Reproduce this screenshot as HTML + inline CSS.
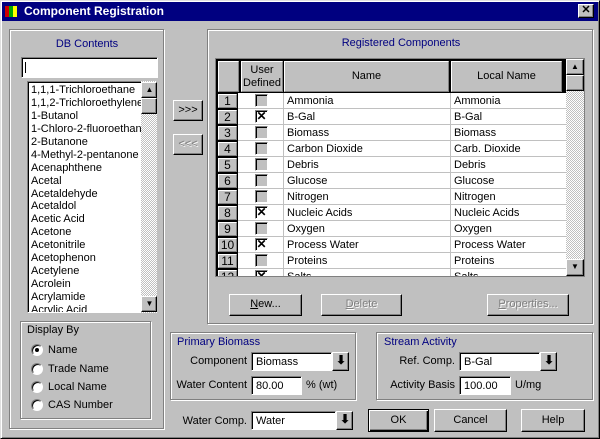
<!DOCTYPE html>
<html><head><style>
*{box-sizing:border-box;margin:0;padding:0}
body{width:600px;height:439px;background:#c0c0c0;font-family:"Liberation Sans",sans-serif;font-size:11px;color:#000;position:relative;overflow:hidden}
.a{position:absolute}
.win{left:0;top:0;width:600px;height:439px;border:1px solid;border-color:#dfdfdf #000 #000 #dfdfdf;box-shadow:inset 1px 1px #fff,inset -1px -1px #808080}
.title{left:2px;top:2px;width:596px;height:19px;background:#000080;color:#fff;font-weight:bold;font-size:12px;line-height:19px;padding-left:22px}
.grp{border:1px solid #808080;box-shadow:1px 1px #fff,inset 1px 1px #fff}
.btn{background:#c0c0c0;border:1px solid;border-color:#fff #000 #000 #fff;box-shadow:inset -1px -1px #808080;text-align:center;line-height:19px}
.sunk{background:#fff;border:1px solid;border-color:#808080 #fff #fff #808080;box-shadow:inset 1px 1px #000}
.blue{color:#000080}
.dis{color:#808080;text-shadow:1px 1px #fff}
.chk{width:13px;height:13px;border:1px solid;border-color:#808080 #fff #fff #808080;box-shadow:inset 1px 1px #000;background:#c0c0c0;font-size:12px;font-weight:bold;line-height:11px;text-align:center}
.chk.x{background:#fff}
.hdr{background:#c0c0c0;border:1px solid;border-color:#fff #808080 #808080 #fff;text-align:center}
.track{background-color:#e0e0e0;background-image:repeating-conic-gradient(#c0c0c0 0 25%,#fff 0 50%);background-size:2px 2px}
.rad{width:12px;height:12px;border-radius:50%;border:1px solid;border-color:#808080 #fff #fff #808080;background:#fff;box-shadow:inset 1px 1px #000}
.dd{width:17px;height:17px;font-size:10px;line-height:15px;padding-left:1px}
</style></head><body>
<div class="a win"></div>
<div class="a title">Component Registration</div>
<div class="a" style="left:5px;top:6px;width:12px;height:11px;background:linear-gradient(90deg,#c00 0 33%,#0a0 33% 66%,#ff0 66%)"></div>
<div class="a btn" style="left:578px;top:4px;width:16px;height:14px;line-height:11px;font-weight:bold;font-size:11px">✕</div>

<!-- left group -->
<div class="a grp" style="left:9px;top:29px;width:155px;height:400px"></div>
<div class="a blue" style="left:10px;top:38px;width:154px;text-align:center">DB Contents</div>
<div class="a sunk" style="left:21px;top:57px;width:137px;height:21px"><div class="a" style="left:3px;top:4px;width:1px;height:11px;background:#000"></div></div>
<div class="a sunk" style="left:27px;top:81px;width:115px;height:232px;overflow:hidden;line-height:12.94px;padding:2px 0 0 3px;white-space:nowrap">
1,1,1-Trichloroethane<br>1,1,2-Trichloroethylene<br>1-Butanol<br>1-Chloro-2-fluoroethane<br>2-Butanone<br>4-Methyl-2-pentanone<br>Acenaphthene<br>Acetal<br>Acetaldehyde<br>Acetaldol<br>Acetic Acid<br>Acetone<br>Acetonitrile<br>Acetophenon<br>Acetylene<br>Acrolein<br>Acrylamide<br>Acrylic Acid</div>
<div class="a track" style="left:141px;top:81px;width:16px;height:232px"></div>
<div class="a btn dd" style="left:141px;top:82px;width:16px;height:16px;line-height:13px;font-size:8px">▲</div>
<div class="a btn" style="left:141px;top:98px;width:16px;height:16px"></div>
<div class="a btn dd" style="left:141px;top:296px;width:16px;height:16px;line-height:13px;font-size:8px">▼</div>

<div class="a grp" style="left:20px;top:321px;width:131px;height:98px"></div>
<div class="a" style="left:27px;top:324px">Display By</div>
<div class="a rad" style="left:31px;top:344px"><div class="a" style="left:3px;top:3px;width:4px;height:4px;background:#000;border-radius:50%"></div></div>
<div class="a" style="left:48px;top:344px">Name</div>
<div class="a rad" style="left:31px;top:363px"></div><div class="a" style="left:48px;top:363px">Trade Name</div>
<div class="a rad" style="left:31px;top:381px"></div><div class="a" style="left:48px;top:381px">Local Name</div>
<div class="a rad" style="left:31px;top:399px"></div><div class="a" style="left:48px;top:399px">CAS Number</div>

<div class="a btn" style="left:173px;top:100px;width:30px;height:21px">&gt;&gt;&gt;</div>
<div class="a btn dis" style="left:173px;top:134px;width:30px;height:21px">&lt;&lt;&lt;</div>

<!-- right group -->
<div class="a grp" style="left:207px;top:29px;width:386px;height:295px"></div>
<div class="a blue" style="left:208px;top:37px;width:386px;text-align:center">Registered Components</div>
<div class="a" style="left:215px;top:58px;width:370px;height:219px;background:#fff;border:1px solid #808080;overflow:hidden">
 <div class="a" style="left:0;top:0;width:350px;height:34px;background:#000"></div>
 <div class="a" style="left:0;top:0;width:22px;height:218px;background:#000"></div>
 <div class="a hdr" style="left:2px;top:2px;width:21px;height:31px"></div>
 <div class="a hdr" style="left:25px;top:2px;width:42px;height:31px;line-height:13px;padding-top:2px">User<br>Defined</div>
 <div class="a hdr" style="left:68px;top:2px;width:165px;height:31px;line-height:29px">Name</div>
 <div class="a hdr" style="left:235px;top:2px;width:111px;height:31px;line-height:29px">Local Name</div>
 <div id="rows"></div>
</div>
<div class="a track" style="left:566px;top:59px;width:18px;height:217px"></div>
<div class="a btn" style="left:566px;top:59px;width:18px;height:16px;line-height:13px;font-size:8px">▲</div>
<div class="a btn" style="left:566px;top:75px;width:18px;height:16px"></div>
<div class="a btn" style="left:566px;top:259px;width:18px;height:17px;line-height:14px;font-size:8px">▼</div>

<div class="a btn" style="left:229px;top:294px;width:73px;height:22px"><u>N</u>ew...</div>
<div class="a btn dis" style="left:321px;top:294px;width:81px;height:22px"><u>D</u>elete</div>
<div class="a btn dis" style="left:487px;top:294px;width:82px;height:22px"><u>P</u>roperties...</div>

<!-- primary biomass -->
<div class="a grp" style="left:170px;top:332px;width:186px;height:68px"></div>
<div class="a blue" style="left:177px;top:336px">Primary Biomass</div>
<div class="a" style="left:150px;top:355px;width:97px;text-align:right">Component</div>
<div class="a sunk" style="left:251px;top:352px;width:81px;height:19px;padding:3px 0 0 4px">Biomass</div>
<div class="a btn dd" style="left:332px;top:352px;width:17px;height:19px;font-weight:bold;font-size:12px">⬇</div>
<div class="a" style="left:150px;top:379px;width:97px;text-align:right">Water Content</div>
<div class="a sunk" style="left:251px;top:376px;width:51px;height:19px;padding:3px 0 0 4px">80.00</div>
<div class="a" style="left:306px;top:379px">% (wt)</div>

<!-- stream activity -->
<div class="a grp" style="left:376px;top:332px;width:217px;height:68px"></div>
<div class="a blue" style="left:384px;top:336px">Stream Activity</div>
<div class="a" style="left:360px;top:355px;width:95px;text-align:right">Ref. Comp.</div>
<div class="a sunk" style="left:459px;top:352px;width:81px;height:19px;padding:3px 0 0 4px">B-Gal</div>
<div class="a btn dd" style="left:540px;top:352px;width:17px;height:19px;font-weight:bold;font-size:12px">⬇</div>
<div class="a" style="left:360px;top:379px;width:95px;text-align:right">Activity Basis</div>
<div class="a sunk" style="left:459px;top:376px;width:52px;height:19px;padding:3px 0 0 4px">100.00</div>
<div class="a" style="left:515px;top:379px">U/mg</div>

<div class="a" style="left:150px;top:415px;width:97px;text-align:right">Water Comp.</div>
<div class="a sunk" style="left:251px;top:411px;width:85px;height:19px;padding:3px 0 0 4px">Water</div>
<div class="a btn dd" style="left:336px;top:411px;width:17px;height:19px;font-weight:bold;font-size:12px">⬇</div>

<div class="a btn" style="left:368px;top:409px;width:61px;height:23px;border:1px solid #000;box-shadow:inset 1px 1px #fff,inset -1px -1px #000,inset -2px -2px #808080;line-height:21px">OK</div>
<div class="a btn" style="left:434px;top:409px;width:73px;height:23px;line-height:21px">Cancel</div>
<div class="a btn" style="left:521px;top:409px;width:64px;height:23px;line-height:21px">Help</div>

<script>
var d=[["Ammonia","Ammonia",0],["B-Gal","B-Gal",1],["Biomass","Biomass",0],["Carbon Dioxide","Carb. Dioxide",0],["Debris","Debris",0],["Glucose","Glucose",0],["Nitrogen","Nitrogen",0],["Nucleic Acids","Nucleic Acids",1],["Oxygen","Oxygen",0],["Process Water","Process Water",1],["Proteins","Proteins",0],["Salts","Salts",1]];
var h="";
d.forEach(function(r,i){var t=34+16*i;
h+='<div class="a hdr" style="left:2px;top:'+(t+1)+'px;width:19px;height:14px;line-height:13px;font-size:12px">'+(i+1)+'</div>';
h+='<div class="a" style="left:22px;top:'+(t+15)+'px;width:328px;height:1px;background:#c0c0c0"></div>';
h+='<div class="a" style="left:67px;top:'+t+'px;width:1px;height:16px;background:#c0c0c0"></div>';
h+='<div class="a" style="left:234px;top:'+t+'px;width:1px;height:16px;background:#c0c0c0"></div>';
h+='<div class="a chk'+(r[2]?' x':'')+'" style="left:39px;top:'+(t+1)+'px">'+(r[2]?'✕':'')+'</div>';
h+='<div class="a" style="left:71px;top:'+(t+2)+'px">'+r[0]+'</div>';
h+='<div class="a" style="left:238px;top:'+(t+2)+'px">'+r[1]+'</div>';});
document.getElementById("rows").innerHTML=h;
</script>
</body></html>
